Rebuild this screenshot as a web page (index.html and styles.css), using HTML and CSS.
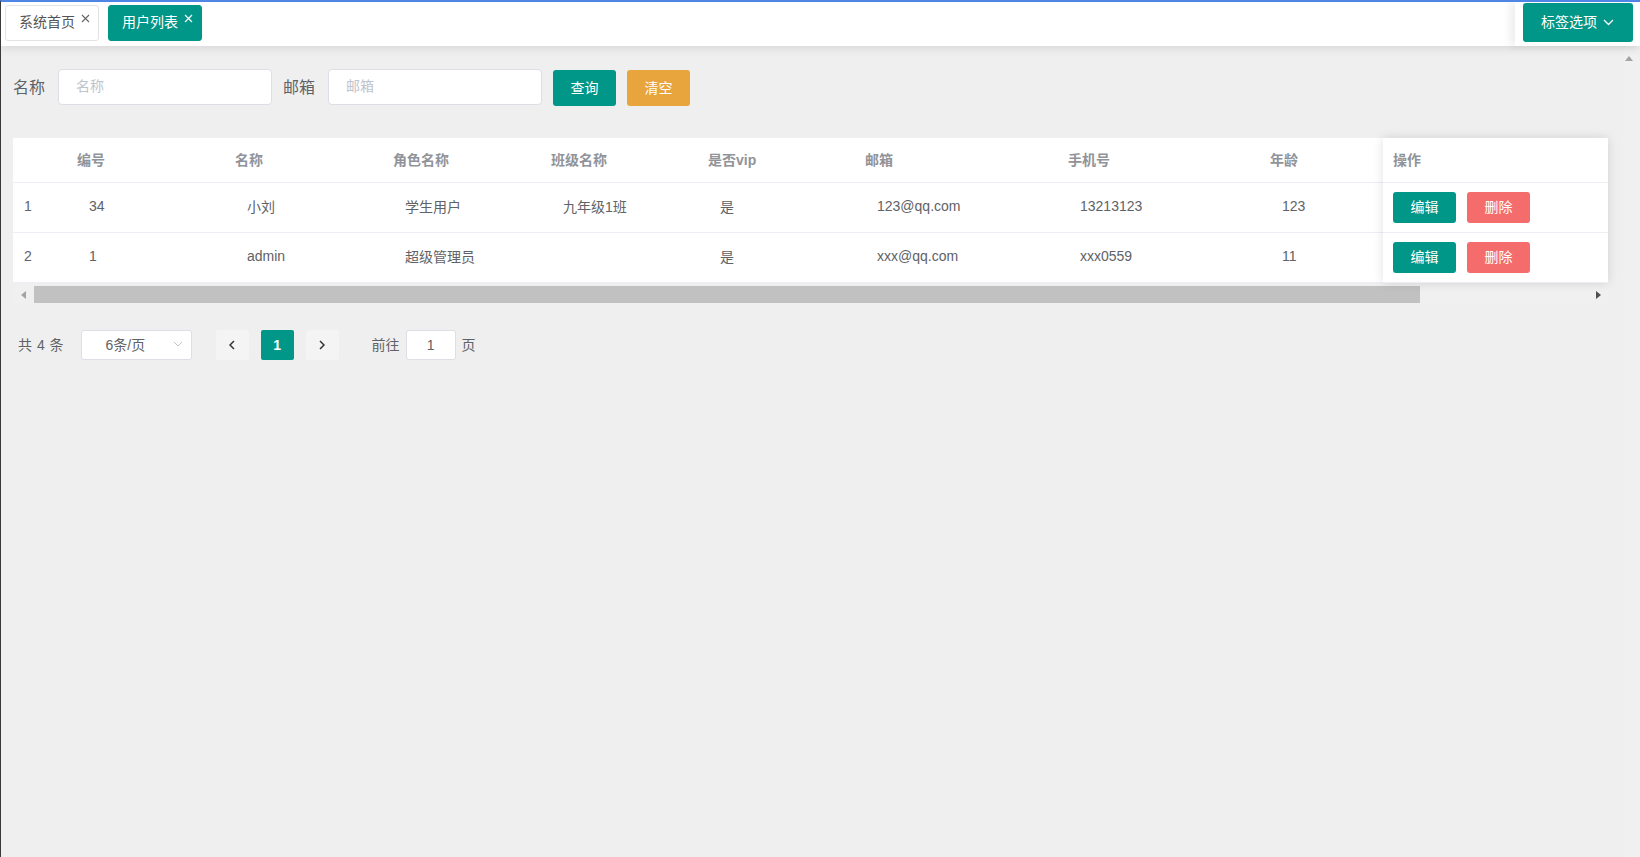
FILE: index.html
```html
<!DOCTYPE html>
<html lang="zh">
<head>
<meta charset="utf-8">
<title>用户列表</title>
<link rel="stylesheet" href="styles.css">
</head>
<body>
<header class="topbar">
  <div class="tabs">
    <div class="tab"><span class="tab-text">系统首页</span><svg class="tab-close" viewBox="0 0 9 9" width="9" height="9"><path d="M1 1L8 8M8 1L1 8" stroke="currentColor" stroke-width="1.1" fill="none"/></svg></div>
    <div class="tab tab-active"><span class="tab-text">用户列表</span><svg class="tab-close" viewBox="0 0 9 9" width="9" height="9"><path d="M1 1L8 8M8 1L1 8" stroke="currentColor" stroke-width="1.2" fill="none"/></svg></div>
  </div>
  <div class="tab-options">
    <button class="opt-btn" type="button"><span class="opt-text">标签选项</span><svg class="opt-chevron" viewBox="0 0 11 7" width="11" height="7"><path d="M1 1L5.5 5.5L10 1" fill="none" stroke="#fff" stroke-width="1.3"/></svg></button>
  </div>
</header>
<div class="body-area">
  <main class="content">
    <form class="search">
      <label class="search-label">名称</label>
      <input class="search-input" type="text" placeholder="名称">
      <label class="search-label">邮箱</label>
      <input class="search-input" type="text" placeholder="邮箱">
      <button class="btn btn-primary" type="button">查询</button>
      <button class="btn btn-warning" type="button">清空</button>
    </form>

    <div class="table">
      <div class="table-scroll">
        <div class="tr thead">
          <div class="c c-idx"></div>
          <div class="c c-w158">编号</div>
          <div class="c c-w158">名称</div>
          <div class="c c-w158">角色名称</div>
          <div class="c c-w157">班级名称</div>
          <div class="c c-w157">是否vip</div>
          <div class="c c-w203">邮箱</div>
          <div class="c c-w202">手机号</div>
          <div class="c c-w202">年龄</div>
        </div>
        <div class="tr trow">
          <div class="c c-idx">1</div>
          <div class="c c-w158">34</div>
          <div class="c c-w158">小刘</div>
          <div class="c c-w158">学生用户</div>
          <div class="c c-w157">九年级1班</div>
          <div class="c c-w157">是</div>
          <div class="c c-w203">123@qq.com</div>
          <div class="c c-w202">13213123</div>
          <div class="c c-w202">123</div>
        </div>
        <div class="tr trow">
          <div class="c c-idx">2</div>
          <div class="c c-w158">1</div>
          <div class="c c-w158">admin</div>
          <div class="c c-w158">超级管理员</div>
          <div class="c c-w157"></div>
          <div class="c c-w157">是</div>
          <div class="c c-w203">xxx@qq.com</div>
          <div class="c c-w202">xxx0559</div>
          <div class="c c-w202">11</div>
        </div>
      </div>
      <div class="table-fixed">
        <div class="tr thead"><div class="c c-op">操作</div></div>
        <div class="tr trow"><div class="c c-op"><button class="btn-sm btn-primary" type="button">编辑</button><button class="btn-sm btn-danger" type="button">删除</button></div></div>
        <div class="tr trow"><div class="c c-op"><button class="btn-sm btn-primary" type="button">编辑</button><button class="btn-sm btn-danger" type="button">删除</button></div></div>
      </div>
    </div>

    <div class="hscroll">
      <div class="hs-btn hs-left"><span class="tri-left"></span></div>
      <div class="hs-thumb"></div>
      <div class="hs-track"></div>
      <div class="hs-btn hs-right"><span class="tri-right"></span></div>
    </div>

    <div class="pagination">
      <span class="pg-total">共 4 条</span>
      <div class="pg-size"><span>6条/页</span><svg class="pg-size-arrow" viewBox="0 0 10 6" width="10" height="6"><path d="M1 1L5 5L9 1" fill="none" stroke="#c0c4cc" stroke-width="1"/></svg></div>
      <div class="pg-btn pg-prev"><svg viewBox="0 0 6 10" width="6" height="10"><path d="M5 1L1 5L5 9" fill="none" stroke="#303133" stroke-width="1.5"/></svg></div>
      <div class="pg-num">1</div>
      <div class="pg-btn pg-next"><svg viewBox="0 0 6 10" width="6" height="10"><path d="M1 1L5 5L1 9" fill="none" stroke="#303133" stroke-width="1.5"/></svg></div>
      <span class="pg-jump">前往</span>
      <div class="pg-input">1</div>
      <span class="pg-unit">页</span>
    </div>
  </main>
  <div class="vscroll"><span class="tri-up"></span></div>
</div>
</body>
</html>
```
FILE: styles.css
```css
* { box-sizing: border-box; }
html, body { height: 100%; }
body {
  margin: 0;
  height: 857px;
  overflow: hidden;
  background: #efefef;
  border-top: 2px solid #4f86e6;
  border-left: 1px solid #3a3a3a;
  font-family: "Liberation Sans", "Noto Sans CJK SC", sans-serif;
  font-size: 14px;
  color: #606266;
  display: flex;
  flex-direction: column;
}

/* top bar */
.topbar {
  height: 44px;
  flex: none;
  background: #fff;
  display: flex;
  justify-content: space-between;
  position: relative;
  z-index: 3;
  box-shadow: 0 2px 9px rgba(0,0,0,0.11);
}
.tabs {
  display: flex;
  gap: 9px;
  padding: 3px 0 0 4px;
}
.tab {
  height: 36px;
  border: 1px solid #e3e3e3;
  border-radius: 3px;
  padding: 0 8px 2px 13px;
  display: flex;
  align-items: center;
  color: #555;
  font-size: 14px;
  background: #fff;
}
.tab-text { line-height: 20px; }
.tab-close {
  align-self: flex-start;
  margin-top: 8px;
  margin-left: 6px;
  color: #666;
}
.tab-active {
  background: #009688;
  border-color: #009688;
  color: #fff;
}
.tab-active .tab-close { color: #fff; }

.tab-options {
  background: #fff;
  padding: 1px 7px 0 8px;
  box-shadow: -5px 0 8px rgba(0,0,0,0.07);
}
.opt-btn {
  height: 39px;
  border: 0;
  border-radius: 3px;
  background: #009688;
  color: #fff;
  font: inherit;
  font-size: 14px;
  padding: 0 19px 0 18px;
  display: flex;
  align-items: center;
}
.opt-text { position: relative; top: -2px; }
.opt-chevron { margin-left: 6px; }

/* body */
.body-area {
  flex: 1;
  display: flex;
  min-height: 0;
}
.content {
  flex: 1;
  min-width: 0;
  padding: 23px 15px 0 12px;
}
.vscroll {
  width: 17px;
  flex: none;
  background: #f0f0f0;
  display: flex;
  justify-content: flex-start;
  padding: 10px 0 0 2px;
}
.tri-up {
  width: 0; height: 0;
  border-left: 4.5px solid transparent;
  border-right: 4.5px solid transparent;
  border-bottom: 5px solid #a3a3a3;
}

/* search */
.search {
  display: flex;
  align-items: center;
  height: 36px;
  margin: 0;
}
.search-label {
  font-size: 16px;
  color: #606266;
  margin-right: 13px;
  position: relative;
  top: -1px;
}
.search-input {
  width: 214px;
  height: 36px;
  border: 1px solid #dcdfe6;
  border-radius: 4px;
  padding: 0 15px 2px 17px;
  font: inherit;
  font-size: 14px;
  color: #606266;
  background: #fff;
  margin-right: 11px;
  outline: none;
}
.search-input::placeholder { color: #c0c4cc; }
.btn {
  width: 63px;
  height: 36px;
  border: 0;
  border-radius: 3px;
  color: #fff;
  font: inherit;
  font-size: 14px;
  margin-top: 2px;
  padding: 0 0 3px;
}
.btn + .btn { margin-left: 11px; }
.btn-primary { background: #009688; }
.btn-warning { background: #e8a43d; }
.btn-danger { background: #f56c6c; }

/* table */
.table {
  margin-top: 33px;
  display: flex;
  background: #fff;
}
.table-scroll {
  flex: 1;
  min-width: 0;
  overflow: hidden;
}
.table-fixed {
  width: 225px;
  flex: none;
  background: #fff;
  position: relative;
  z-index: 1;
  box-shadow: 0 0 10px rgba(0,0,0,0.12);
}
.tr {
  display: flex;
  border-bottom: 1px solid #ebeef5;
}
.thead { height: 45px; }
.trow { height: 50px; }
.c {
  flex: none;
  display: flex;
  align-items: center;
  white-space: nowrap;
  padding-left: 22px;
  padding-bottom: 3px;
}
.thead .c {
  padding-left: 10px;
  font-weight: bold;
  color: #909399;
}
.trow .c-idx { padding-left: 11px; }
.c-idx { width: 54px; }
.c-w158 { width: 158px; }
.c-w157 { width: 157px; }
.c-w203 { width: 203px; }
.c-w202 { width: 202px; }
.trow .c-op { width: 225px; padding-left: 10px; padding-bottom: 0; }
.thead .c-op { width: 225px; padding-left: 10px; }
.btn-sm {
  width: 63px;
  height: 31px;
  border: 0;
  border-radius: 3px;
  color: #fff;
  font: inherit;
  font-size: 14px;
  padding: 0 0 3px;
}
.btn-sm + .btn-sm { margin-left: 11px; }

/* horizontal scrollbar */
.hscroll {
  margin-top: 3px;
  height: 17px;
  display: flex;
  background: #f0f0f0;
}
.hs-btn {
  flex: none;
  display: flex;
  align-items: center;
  justify-content: center;
}
.hs-left { width: 21px; }
.hs-right { width: 19px; }
.hs-thumb { width: 1386px; flex: none; background: #c1c1c1; }
.hs-track { flex: 1; }
.tri-left {
  width: 0; height: 0;
  border-top: 4.5px solid transparent;
  border-bottom: 4.5px solid transparent;
  border-right: 5px solid #a3a3a3;
}
.tri-right {
  width: 0; height: 0;
  border-top: 4.5px solid transparent;
  border-bottom: 4.5px solid transparent;
  border-left: 5px solid #505050;
}

/* pagination */
.pagination {
  margin-top: 27px;
  height: 30px;
  display: flex;
  align-items: center;
  padding-left: 5px;
  font-size: 14px;
  color: #606266;
}
.pagination > span { position: relative; top: -1px; }
.pg-total { margin-right: 17px; word-spacing: 1px; }
.pg-size {
  width: 111px;
  height: 30px;
  border: 1px solid #dcdfe6;
  border-radius: 3px;
  background: #fff;
  display: flex;
  align-items: center;
  padding: 0 0 2px 24px;
  position: relative;
}
.pg-size-arrow { margin-left: auto; margin-right: 8px; }
.pg-btn {
  width: 33px;
  height: 30px;
  background: #f4f4f5;
  border-radius: 2px;
  display: flex;
  align-items: center;
  justify-content: center;
}
.pg-prev { margin-left: 24px; }
.pg-num {
  width: 33px;
  height: 30px;
  margin: 0 12px;
  background: #009688;
  color: #fff;
  font-weight: bold;
  border-radius: 2px;
  display: flex;
  align-items: center;
  justify-content: center;
}
.pg-jump { margin-left: 33px; }
.pg-input {
  width: 50px;
  height: 30px;
  margin: 0 6px;
  border: 1px solid #dcdfe6;
  border-radius: 3px;
  background: #fff;
  display: flex;
  align-items: center;
  justify-content: center;
}
```
